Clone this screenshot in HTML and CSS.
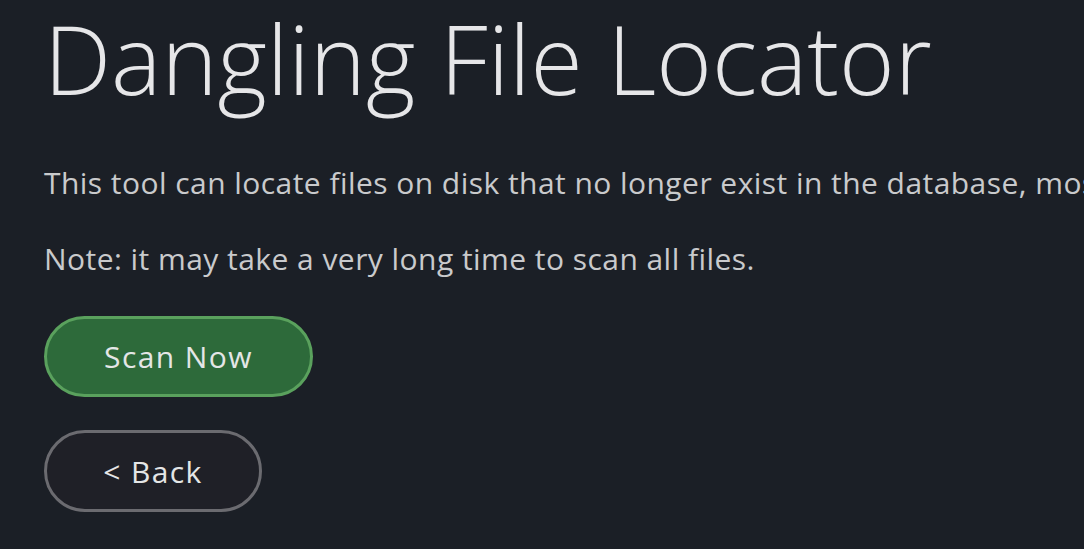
FILE: index.html
```html
<!DOCTYPE html>
<html>
<head>
<meta charset="utf-8">
<link rel="stylesheet" href="styles.css">
</head>
<body>
<main class="page">
  <h1 class="title">Dangling File Locator</h1>
  <p class="text">This tool can locate files on disk that no longer exist in the database, mostly caused by interrupted imports or manual deletions.</p>
  <p class="text">Note: it may take a very long time to scan all files.</p>
  <div class="actions">
    <button class="btn btn-primary">Scan Now</button>
    <button class="btn btn-secondary">&lt; Back</button>
  </div>
</main>
</body>
</html>
```
FILE: styles.css
```css
html, body {
  margin: 0;
  padding: 0;
  background: #1b1f26;
  overflow: hidden;
}
.page {
  padding: 0 0 0 44px;
  font-family: "Open Sans", "Noto Sans", sans-serif;
  color: #c9cacc;
  overflow: hidden;
}
.title {
  margin: 0;
  font-size: 95px;
  font-weight: 300;
  line-height: 116px;
  color: #e6e6e8;
  white-space: nowrap;
}
.text {
  margin: 0;
  font-size: 30px;
  line-height: 38px;
  letter-spacing: 0.45px;
  white-space: nowrap;
}
.title + .text {
  margin-top: 48px;
}
.text + .text {
  margin-top: 38px;
}
.actions {
  margin-top: 38px;
  display: flex;
  flex-direction: column;
  align-items: flex-start;
  gap: 33px;
}
.btn {
  font-family: "Open Sans", "Noto Sans", sans-serif;
  font-size: 30px;
  font-weight: 400;
  letter-spacing: 1.4px;
  border-radius: 999px;
  border: 3px solid;
  height: 82px;
  padding: 0;
  color: #e4e6e6;
  cursor: pointer;
}
.btn-primary {
  background: #2d6a3a;
  border-color: #5aa15d;
  width: 269px;
  height: 81px;
}
.btn-secondary {
  background: #1f2027;
  border-color: #6b6b70;
  width: 218px;
}
```
